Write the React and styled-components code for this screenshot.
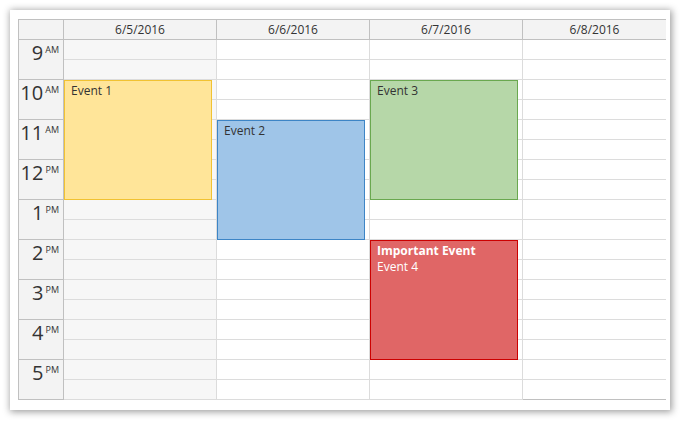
import React from "react";
import styled, { createGlobalStyle } from "styled-components";

const GlobalStyle = createGlobalStyle`
  html, body {
    margin: 0;
    padding: 0;
    background: #ffffff;
  }
  body {
    font-family: "Open Sans", "Noto Sans", "DejaVu Sans", sans-serif;
    color: #333333;
  }
`;

const days = [
  { label: "6/5/2016", weekend: true },
  { label: "6/6/2016" },
  { label: "6/7/2016" },
  { label: "6/8/2016", last: true },
];

const hours = [
  { num: "9", ap: "AM" },
  { num: "10", ap: "AM" },
  { num: "11", ap: "AM" },
  { num: "12", ap: "PM" },
  { num: "1", ap: "PM" },
  { num: "2", ap: "PM" },
  { num: "3", ap: "PM" },
  { num: "4", ap: "PM" },
  { num: "5", ap: "PM" },
];

const palette = {
  yellow: { bg: "#ffe599", border: "#f1c232", text: "#333333" },
  blue: { bg: "#9fc5e8", border: "#3d85c6", text: "#333333" },
  green: { bg: "#b6d7a8", border: "#6aa84f", text: "#333333" },
  red: { bg: "#e06666", border: "#cc0000", text: "#ffffff" },
};

// start hour and length in hours, day index
const events = [
  { day: 0, start: 10, length: 3, color: "yellow", text: "Event 1" },
  { day: 1, start: 11, length: 3, color: "blue", text: "Event 2" },
  { day: 2, start: 10, length: 3, color: "green", text: "Event 3" },
  { day: 2, start: 14, length: 3, color: "red", title: "Important Event", text: "Event 4" },
];

const HOUR_HEIGHT = 40;
const FIRST_HOUR = 9;

const Page = styled.div`
  padding: 10px;
`;

const Panel = styled.div`
  width: 660px;
  height: 400px;
  box-sizing: border-box;
  padding: 9px 4px 10px 8px;
  background: #ffffff;
  box-shadow: 1px 1px 7px 1px rgba(0, 0, 0, 0.38);
`;

const Calendar = styled.div`
  display: grid;
  grid-template-columns: 46px 153px 153px 153px 143px;
  border-top: 1px solid #c0c0c0;
  width: 648px;
`;

const Corner = styled.div`
  height: 20px;
  box-sizing: border-box;
  background: #f3f3f3;
  border-left: 1px solid #c0c0c0;
  border-right: 1px solid #c0c0c0;
  border-bottom: 1px solid #c0c0c0;
`;

const DayHeader = styled.div`
  height: 20px;
  box-sizing: border-box;
  background: #f3f3f3;
  border-bottom: 1px solid #c0c0c0;
  border-right: ${(p) => (p.$last ? "none" : "1px solid #c0c0c0")};
  display: flex;
  align-items: center;
  justify-content: center;
  font-size: 12px;
  color: #333333;
`;

const TimeColumn = styled.div`
  display: flex;
  flex-direction: column;
`;

const HourCell = styled.div`
  height: ${HOUR_HEIGHT}px;
  box-sizing: border-box;
  background: #f3f3f3;
  border-left: 1px solid #c0c0c0;
  border-right: 1px solid #c0c0c0;
  border-bottom: 1px solid #c0c0c0;
  display: flex;
  justify-content: flex-end;
  align-items: flex-start;
  padding: 1px 4px 0 0;
  color: #333333;
`;

const HourNum = styled.span`
  font-size: 20px;
  line-height: 24px;
`;

const HourAp = styled.span`
  font-size: 9px;
  line-height: 10px;
  margin: 4px 0 0 2px;
`;

const DayColumn = styled.div`
  position: relative;
  display: flex;
  flex-direction: column;
  background: ${(p) => (p.$weekend ? "#f7f7f7" : "#ffffff")};
  border-right: ${(p) => (p.$last ? "none" : "1px solid #dcdcdc")};
`;

const Slot = styled.div`
  height: 20px;
  box-sizing: border-box;
  border-bottom: 1px solid #dcdcdc;

  &:last-child {
    border-bottom-color: #c0c0c0;
  }
`;

const Event = styled.div`
  position: absolute;
  left: 0;
  width: 148px;
  box-sizing: border-box;
  padding: 2px 6px;
  background: ${(p) => palette[p.$color].bg};
  border: 1px solid ${(p) => palette[p.$color].border};
  color: ${(p) => palette[p.$color].text};
  font-size: 12px;
  line-height: 16px;
  overflow: hidden;
`;

const EventTitle = styled.div`
  font-weight: bold;
`;

const App = () => {
  return (
    <Page>
      <GlobalStyle />
      <Panel>
        <Calendar>
          <Corner />
          {days.map((d) => (
            <DayHeader key={d.label} $last={d.last}>
              {d.label}
            </DayHeader>
          ))}

          <TimeColumn>
            {hours.map((h) => (
              <HourCell key={h.num}>
                <HourNum>{h.num}</HourNum>
                <HourAp>{h.ap}</HourAp>
              </HourCell>
            ))}
          </TimeColumn>

          {days.map((d, i) => (
            <DayColumn key={d.label} $weekend={d.weekend} $last={d.last}>
              {Array.from({ length: hours.length * 2 }).map((_, s) => (
                <Slot key={s} />
              ))}
              {events
                .filter((e) => e.day === i)
                .map((e) => (
                  <Event
                    key={e.text}
                    $color={e.color}
                    style={{
                      top: (e.start - FIRST_HOUR) * HOUR_HEIGHT,
                      height: e.length * HOUR_HEIGHT,
                    }}
                  >
                    {e.title && <EventTitle>{e.title}</EventTitle>}
                    <div>{e.text}</div>
                  </Event>
                ))}
            </DayColumn>
          ))}
        </Calendar>
      </Panel>
    </Page>
  );
};

export default App;
